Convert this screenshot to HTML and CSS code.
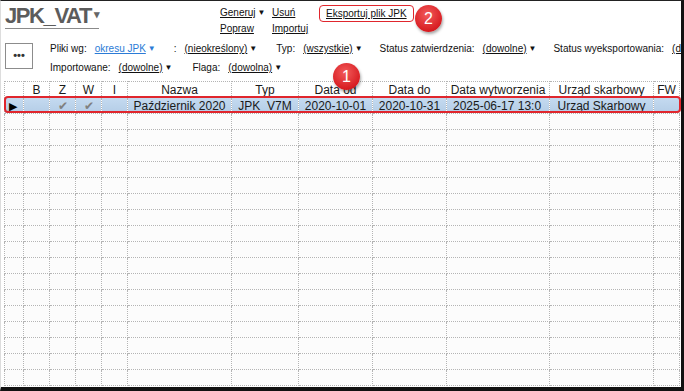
FILE: index.html
```html
<!DOCTYPE html>
<html lang="pl">
<head>
    <meta charset="UTF-8">
    <meta name="viewport" content="width=device-width, initial-scale=1.0">
    <title>JPK_VAT</title>
    <link rel="stylesheet" href="styles.css">
</head>
<body>
<div class="window">

    <div class="top">
        <div class="title-wrap">
            <span class="title">JPK_VAT<span class="caret-dark">&#9662;</span></span>
        </div>
        <div class="actions">
            <a class="link">Generuj<span class="arrow">&#9660;</span></a>
            <a class="link">Usuń</a>
            <a class="link">Popraw</a>
            <a class="link">Importuj</a>
        </div>
        <div class="export">
            <a class="link export-link">Eksportuj plik JPK</a>
            <span class="badge badge-two">2</span>
        </div>
    </div>

    <div class="filters">
        <button class="more">&bull;&bull;&bull;</button>
        <div class="filter-rows">
            <div class="filter-row">
                <span class="label">Pliki wg:</span>
                <a class="value blue">okresu JPK<span class="arrow">&#9660;</span></a>
                <span class="label colon">:</span>
                <a class="value">(nieokreślony)<span class="arrow">&#9660;</span></a>
                <span class="label typ">Typ:</span>
                <a class="value">(wszystkie)<span class="arrow">&#9660;</span></a>
                <span class="label status">Status zatwierdzenia:</span>
                <a class="value">(dowolne)<span class="arrow">&#9660;</span></a>
                <span class="label status">Status wyeksportowania:</span>
                <a class="value">(dowolne)</a>
            </div>
            <div class="filter-row">
                <span class="label">Importowane:</span>
                <a class="value">(dowolne)<span class="arrow">&#9660;</span></a>
                <span class="label flaga">Flaga:</span>
                <a class="value">(dowolna)<span class="arrow">&#9660;</span></a>
            </div>
        </div>
    </div>

    <div class="grid-wrap">
        <table class="grid">
            <colgroup>
                <col class="c-ind"><col class="c-flag"><col class="c-flag"><col class="c-flag"><col class="c-flag">
                <col class="c-nazwa"><col class="c-typ"><col class="c-date"><col class="c-date">
                <col class="c-wyt"><col class="c-urzad"><col class="c-fw">
            </colgroup>
            <thead>
                <tr>
                    <th></th><th>B</th><th>Z</th><th>W</th><th>I</th><th>Nazwa</th><th>Typ</th>
                    <th>Data od</th><th>Data do</th><th>Data wytworzenia</th><th>Urząd skarbowy</th><th>FW</th>
                </tr>
            </thead>
            <tbody>
                <tr class="selected">
                    <td class="ind">&#9654;</td><td></td><td class="check">&#10004;</td><td class="check">&#10004;</td><td></td>
                    <td>Październik 2020</td><td>JPK_V7M</td><td>2020-10-01</td><td>2020-10-31</td>
                    <td class="clip">2025-06-17 13:0</td><td>Urząd Skarbowy</td><td></td>
                </tr>
                <tr><td></td><td></td><td></td><td></td><td></td><td></td><td></td><td></td><td></td><td></td><td></td><td></td></tr>
                <tr><td></td><td></td><td></td><td></td><td></td><td></td><td></td><td></td><td></td><td></td><td></td><td></td></tr>
                <tr><td></td><td></td><td></td><td></td><td></td><td></td><td></td><td></td><td></td><td></td><td></td><td></td></tr>
                <tr><td></td><td></td><td></td><td></td><td></td><td></td><td></td><td></td><td></td><td></td><td></td><td></td></tr>
                <tr><td></td><td></td><td></td><td></td><td></td><td></td><td></td><td></td><td></td><td></td><td></td><td></td></tr>
                <tr><td></td><td></td><td></td><td></td><td></td><td></td><td></td><td></td><td></td><td></td><td></td><td></td></tr>
                <tr><td></td><td></td><td></td><td></td><td></td><td></td><td></td><td></td><td></td><td></td><td></td><td></td></tr>
                <tr><td></td><td></td><td></td><td></td><td></td><td></td><td></td><td></td><td></td><td></td><td></td><td></td></tr>
                <tr><td></td><td></td><td></td><td></td><td></td><td></td><td></td><td></td><td></td><td></td><td></td><td></td></tr>
                <tr><td></td><td></td><td></td><td></td><td></td><td></td><td></td><td></td><td></td><td></td><td></td><td></td></tr>
                <tr><td></td><td></td><td></td><td></td><td></td><td></td><td></td><td></td><td></td><td></td><td></td><td></td></tr>
                <tr><td></td><td></td><td></td><td></td><td></td><td></td><td></td><td></td><td></td><td></td><td></td><td></td></tr>
                <tr><td></td><td></td><td></td><td></td><td></td><td></td><td></td><td></td><td></td><td></td><td></td><td></td></tr>
                <tr><td></td><td></td><td></td><td></td><td></td><td></td><td></td><td></td><td></td><td></td><td></td><td></td></tr>
                <tr><td></td><td></td><td></td><td></td><td></td><td></td><td></td><td></td><td></td><td></td><td></td><td></td></tr>
                <tr><td></td><td></td><td></td><td></td><td></td><td></td><td></td><td></td><td></td><td></td><td></td><td></td></tr>
                <tr><td></td><td></td><td></td><td></td><td></td><td></td><td></td><td></td><td></td><td></td><td></td><td></td></tr>
            </tbody>
        </table>
        <div class="row-mark"></div>
        <span class="badge badge-one">1</span>
    </div>

</div>
</body>
</html>
```

FILE: styles.css
```css
html, body{
    margin: 0;
    padding: 0;
    background-color: white;
}
.window{
    width: 684px;
    height: 391px;
    box-sizing: border-box;
    border-top: 1px solid #222;
    border-left: 1px solid #ddd;
    border-right: 3px solid #111;
    border-bottom: 4px solid #111;
    overflow: hidden;
    position: relative;
    font-family: "Liberation Sans", Arial, sans-serif;
    color: #111;
}

/* top bar */
.top{
    display: flex;
    height: 38px;
}
.title-wrap{
    width: 219px;
    padding-left: 4px;
    padding-top: 2px;
    box-sizing: border-box;
}
.title{
    display: inline-block;
    font-size: 22px;
    font-weight: bold;
    color: #5c5c5c;
    letter-spacing: -1.4px;
    line-height: 22px;
    padding-bottom: 1px;
    border-bottom: 1px solid #8a8a8a;
}
.caret-dark{
    font-size: 11px;
    vertical-align: 5px;
    margin-left: 3px;
    color: #666;
}
.actions{
    display: grid;
    grid-template-columns: 52px 49px;
    grid-auto-rows: 16px;
    padding-top: 4px;
}
.link{
    font-size: 10px;
    color: #111;
    text-decoration: underline;
    line-height: 16px;
}
.arrow{
    font-size: 8px;
    margin-left: 2px;
    vertical-align: 1px;
    text-decoration: none;
    display: inline-block;
}
.export{
    position: relative;
    padding-top: 2px;
}
.export-link{
    display: inline-block;
    margin-left: -2px;
    padding: 0 6px;
    line-height: 15px;
    border: 1.5px solid #e0262d;
    border-radius: 4px;
}

/* annotation badges */
.badge{
    position: absolute;
    width: 27px;
    height: 27px;
    border-radius: 50%;
    background: radial-gradient(circle at 45% 35%, #f25b5b, #d81d22 70%, #b8141a);
    box-shadow: 1px 2px 3px rgba(0,0,0,0.35);
    color: white;
    font-size: 16px;
    line-height: 27px;
    text-align: center;
}
.badge-two{
    left: 94px;
    top: 4px;
}
.badge-one{
    left: 329px;
    top: -18px;
}

/* filters */
.filters{
    display: flex;
    height: 42px;
}
.more{
    flex-shrink: 0;
    width: 28px;
    height: 26px;
    margin: 4px 0 0 4px;
    padding: 0 0 2px 0;
    border: 1px solid #8c8c8c;
    background-color: white;
    font-family: "Liberation Sans", Arial, sans-serif;
    font-size: 11px;
    font-weight: bold;
    letter-spacing: 0;
    color: #333;
}
.filter-rows{
    margin-left: 17px;
}
.filter-row{
    display: flex;
    align-items: center;
    height: 19px;
    font-size: 10px;
    white-space: nowrap;
}
.label{
    margin-right: 8px;
}
.value{
    color: #111;
    text-decoration: underline;
}
.value.blue{
    color: #2b7bd6;
}
.colon{
    margin-left: 18px;
}
.typ{
    margin-left: 19px;
}
.status{
    margin-left: 17px;
}
.flaga{
    margin-left: 20px;
}

/* grid */
.grid-wrap{
    position: relative;
    margin-left: 3px;
}
.grid{
    border-collapse: collapse;
    table-layout: fixed;
    width: 676px;
    font-size: 12px;
    color: #1a1a1a;
}
.c-ind{ width: 19px; }
.c-flag{ width: 26px; }
.c-nazwa{ width: 104px; }
.c-typ{ width: 67px; }
.c-date{ width: 74px; }
.c-wyt{ width: 103px; }
.c-urzad{ width: 104px; }
.c-fw{ width: 26px; }
.grid th, .grid td{
    height: 15px;
    padding: 0;
    border: 1px dotted #b4b4b4;
    text-align: center;
    font-weight: normal;
    white-space: nowrap;
    overflow: hidden;
}
.grid tbody tr{
    background-color: #fcfcfc;
}
.grid tr.selected{
    background: linear-gradient(#c4daf0, #b3cce6);
}
.grid td.ind{
    font-size: 11px;
    line-height: 12px;
    text-align: left;
    padding-left: 4px;
    color: #000;
}
.grid td.check{
    color: #808080;
    font-size: 12px;
}
.grid td.clip{
    text-align: left;
    padding-left: 6px;
}
.row-mark{
    position: absolute;
    left: 0;
    top: 15px;
    width: 677px;
    height: 17px;
    border: 2px solid #e0262d;
    border-radius: 4px;
    box-sizing: border-box;
}
```
